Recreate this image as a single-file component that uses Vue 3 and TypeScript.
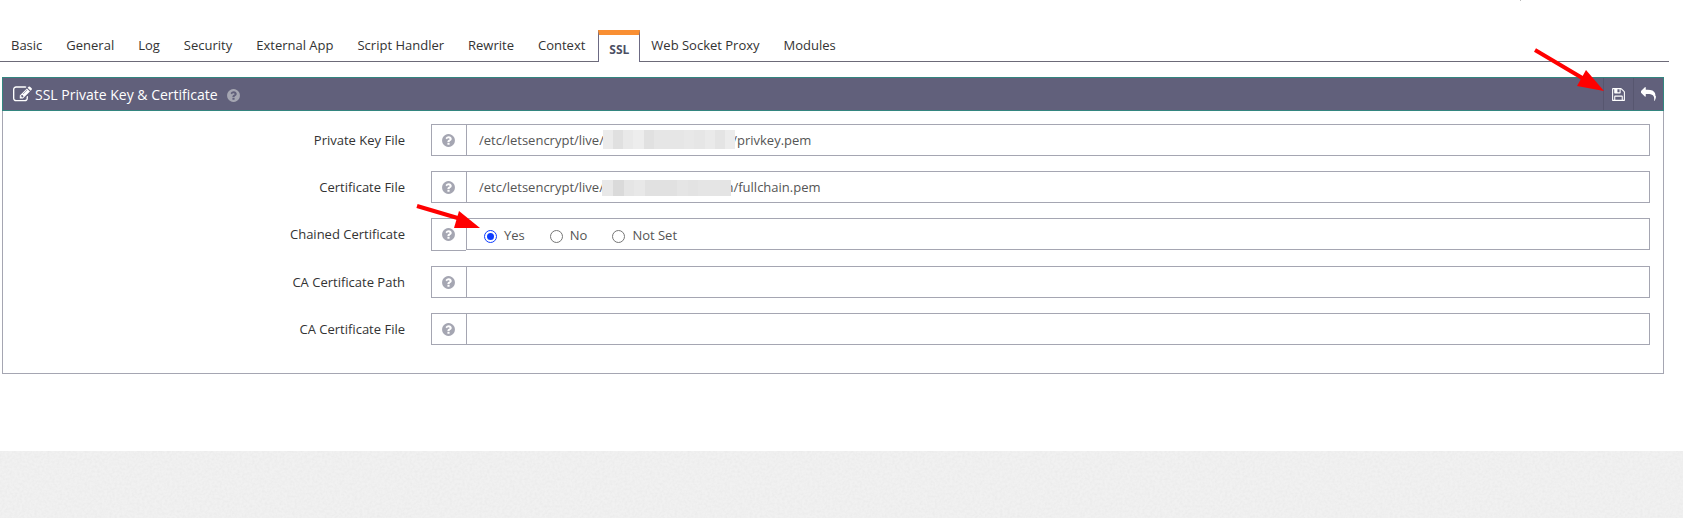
<script setup lang="ts">
import { ref } from 'vue'

interface Field {
  id: string
  label: string
  kind: 'text' | 'radio'
  mask?: 'key' | 'cert'
}

const tabs = ['Basic', 'General', 'Log', 'Security', 'External App', 'Script Handler', 'Rewrite', 'Context', 'SSL', 'Web Socket Proxy', 'Modules']
const activeTab = ref('SSL')

const fields: Field[] = [
  { id: 'keyFile', label: 'Private Key File', kind: 'text', mask: 'key' },
  { id: 'certFile', label: 'Certificate File', kind: 'text', mask: 'cert' },
  { id: 'certChain', label: 'Chained Certificate', kind: 'radio' },
  { id: 'caCertPath', label: 'CA Certificate Path', kind: 'text' },
  { id: 'caCertFile', label: 'CA Certificate File', kind: 'text' },
]

// The host directory is blanked out and covered by a mosaic.
const values = ref<Record<string, string>>({
  keyFile: '/etc/letsencrypt/live/' + ' '.repeat(38) + '/privkey.pem',
  certFile: '/etc/letsencrypt/live/' + ' '.repeat(36) + 'n/fullchain.pem',
  certChain: 'Yes',
  caCertPath: '',
  caCertFile: '',
})

const choices = ['Yes', 'No', 'Not Set']

const masks = {
  key: [[10, '#ebebeb'], [10, '#e0e0e0'], [10, '#e9e9e9'], [11, '#ededed'], [10, '#e1e1e1'], [30, '#e6e6e6'], [10, '#e8e8e8'], [11, '#e6e6e6'], [10, '#eaeaea'], [10, '#e4e4e4'], [10, '#ececec']],
  cert: [[11, '#e8e8e8'], [11, '#dadada'], [10, '#e5e5e5'], [11, '#e8e8e8'], [32, '#e1e1e1'], [11, '#e5e5e5'], [10, '#e3e3e3'], [22, '#e5e5e5'], [11, '#e4e4e4']],
} as Record<string, [number, string][]>

const questionPath = 'M1024 1376v-192q0-14-9-23t-23-9h-192q-14 0-23 9t-9 23v192q0 14 9 23t23 9h192q14 0 23-9t9-23zm256-672q0-88-55.5-163t-138.5-116-170-41q-243 0-371 213-15 24 8 42l132 100q7 6 19 6 16 0 25-12 53-68 86-92 34-24 86-24 48 0 85.5 26t37.5 59q0 38-20 61t-68 45q-63 28-115.5 86.5t-52.5 125.5v36q0 14 9 23t23 9h192q14 0 23-9t9-23q0-19 21.5-49.5t54.5-49.5q32-18 49-28.5t46-35 44.5-48 28-60.5 12.5-81zm384 192q0 209-103 385.5t-279.5 279.5-385.5 103-385.5-103-279.5-279.5-103-385.5 103-385.5 279.5-279.5 385.5-103 385.5 103 279.5 279.5 103 385.5z'
</script>

<template>
  <div class="page">
    <main class="content">
      <span class="speck" aria-hidden="true"></span>
      <nav class="tabs">
        <a v-for="t in tabs" :key="t" href="#" class="tab" :class="{ active: t === activeTab }" @click.prevent="activeTab = t">{{ t }}</a>
      </nav>

      <section class="widget">
        <header class="head">
          <svg class="edit" viewBox="0 0 1792 1792" aria-hidden="true"><path d="M888 1184l116-116-152-152-116 116v56h96v96h56zm440-720q-16-16-33 1l-350 350q-17 17-1 33t33-1l350-350q17-17 1-33zm80 594v190q0 119-84.5 203.5t-203.5 84.5h-832q-119 0-203.5-84.5t-84.5-203.5v-832q0-119 84.5-203.5t203.5-84.5h832q63 0 117 25 15 7 18 23 3 17-9 29l-49 49q-14 14-32 8-23-6-45-6h-832q-66 0-113 47t-47 113v832q0 66 47 113t113 47h832q66 0 113-47t47-113v-126q0-13 9-22l64-64q15-15 35-7t20 29zm-96-738l288 288-672 672h-288v-288zm444 132l-92 92-288-288 92-92q28-28 68-28t68 28l152 152q28 28 28 68t-28 68z" /></svg>
          <h2>SSL Private Key &amp; Certificate</h2>
          <button type="button" class="help" aria-label="Help">
            <svg class="question" viewBox="0 0 1792 1792"><path :d="questionPath" /></svg>
          </button>
          <div class="tools">
            <button type="button" class="tool" aria-label="Save">
              <svg class="save" viewBox="0 0 1792 1792"><path d="M512 1536h768v-384h-768v384zm896 0h128v-896q0-14-10-38.5t-20-34.5l-281-281q-10-10-34-20t-39-10v416q0 40-28 68t-68 28h-576q-40 0-68-28t-28-68v-416h-128v1280h128v-416q0-40 28-68t68-28h832q40 0 68 28t28 68v416zm-384-928v-320q0-13-9.5-22.5t-22.5-9.5h-192q-13 0-22.5 9.5t-9.5 22.5v320q0 13 9.5 22.5t22.5 9.5h192q13 0 22.5-9.5t9.5-22.5zm640 32v928q0 40-28 68t-68 28h-1344q-40 0-68-28t-28-68v-1344q0-40 28-68t68-28h928q40 0 88 20t76 48l280 280q28 28 48 76t20 88z" /></svg>
            </button>
            <button type="button" class="tool" aria-label="Back">
              <svg class="reply" viewBox="0 0 1792 1792"><path d="M1792 1120q0 166-127 451-3 7-10.5 24t-13.5 30-13 22q-12 17-28 17-15 0-23.5-10t-8.5-25q0-9 2.5-26.5t2.5-23.5q5-68 5-123 0-112-19.5-200.5t-54-153.5-89-112-117.5-78-147-46.5-168-23-191-6.5h-224v256q0 26-19 45t-45 19-45-19l-512-512q-19-19-19-45t19-45l512-512q19-19 45-19t45 19 19 45v256h224q713 0 875 403 53 134 53 333z" /></svg>
            </button>
            <svg class="arrow arrow-save" viewBox="0 0 70 44" aria-hidden="true">
              <path d="M1 2 50 31" /><polygon points="70,43 52,22 43,38" />
            </svg>
          </div>
        </header>

        <form class="body" @submit.prevent>
          <div v-for="f in fields" :key="f.id" class="row">
            <label v-if="f.kind === 'text'" class="label" :for="f.id">{{ f.label }}</label>
            <span v-else :id="f.id" class="label">{{ f.label }}</span>
            <div class="group" :class="f.kind">
              <button type="button" class="addon" :aria-label="'Help: ' + f.label">
                <svg class="question" viewBox="0 0 1792 1792"><path :d="questionPath" /></svg>
              </button>
              <input v-if="f.kind === 'text'" :id="f.id" v-model="values[f.id]" class="control" type="text" spellcheck="false" />
              <div v-else class="control choices" role="radiogroup" :aria-labelledby="f.id">
                <label v-for="c in choices" :key="c" class="choice">
                  <input v-model="values[f.id]" type="radio" :name="f.id" :value="c" />{{ c }}
                </label>
              </div>
              <div v-if="f.mask" class="mask" :class="f.mask" aria-hidden="true">
                <i v-for="(m, i) in masks[f.mask]" :key="i" :style="{ width: m[0] + 'px', background: m[1] }"></i>
              </div>
              <svg v-if="f.kind === 'radio'" class="arrow arrow-yes" viewBox="0 0 66 26" aria-hidden="true">
                <path d="M1 3 45 16" /><polygon points="64,25 43,8 38,25" />
              </svg>
            </div>
          </div>
        </form>
      </section>
    </main>
    <footer class="foot">
      <svg class="grain" aria-hidden="true">
        <filter id="grain" x="0" y="0" width="100%" height="100%">
          <feTurbulence type="fractalNoise" baseFrequency="0.4" numOctaves="2" stitchTiles="stitch" />
          <feColorMatrix type="matrix" values="0 0 0 0 0.6  0 0 0 0 0.6  0 0 0 0 0.6  0.3 0 0 0 -0.1" />
        </filter>
        <rect width="100%" height="100%" filter="url(#grain)" />
      </svg>
    </footer>
  </div>
</template>

<style>
body {
  margin: 0;
  background: #fff;
}
</style>

<style scoped>
.page {
  display: flex;
  flex-direction: column;
  min-height: 100vh;
  font: 13px/18px "Open Sans", "Noto Sans", sans-serif;
  color: #333;
}
.content {
  position: relative;
  padding: 30px 14px 77px 0;
}
.speck {
  position: absolute;
  top: 0;
  right: 162px;
  width: 1px;
  height: 1px;
  background: #bbb;
}
.tabs {
  display: flex;
  gap: 2px;
  height: 31px;
  border-bottom: 1px solid #6c6a78;
}
.tab {
  box-sizing: border-box;
  height: 32px;
  padding: 6px 10px;
  border: solid transparent;
  border-width: 0 1px;
  color: #333;
  text-decoration: none;
}
.tab.active {
  margin-right: -2px;
  border-color: #6c6a84;
  border-top: 5px solid #f98f33;
  background: #fff;
  color: #4c4f63;
  font-size: 12px;
  font-weight: 700;
}
.widget {
  margin: 15px 5px 0 2px;
}
.head {
  display: flex;
  align-items: center;
  height: 32px;
  padding-left: 10px;
  border: 1px solid #33857f;
  background: #61607b;
  color: #fff;
}
.head h2 {
  margin: 2px 8px 0 3px;
  font-size: 14px;
  line-height: 20px;
  font-weight: 400;
}
.help {
  margin-top: 2px;
}
svg {
  display: block;
  fill: currentColor;
}
.edit {
  width: 19px;
  height: 19px;
}
.question {
  width: 15px;
  height: 15px;
}
button {
  padding: 0;
  border: 0;
  background: none;
  color: #a5a6b2;
  font: inherit;
}
.tools {
  position: relative;
  display: flex;
  align-self: stretch;
  margin-left: auto;
}
.tool {
  display: flex;
  align-items: center;
  justify-content: center;
  box-sizing: border-box;
  width: 30px;
  border-left: 1px solid #57566f;
  color: #fff;
}
.save {
  width: 15px;
  height: 15px;
}
.reply {
  width: 15px;
  height: 15px;
}
.arrow {
  position: absolute;
  overflow: visible;
  fill: #f00;
  pointer-events: none;
}
.arrow path {
  fill: none;
  stroke: #f00;
  stroke-width: 4;
}
.arrow-save {
  width: 70px;
  height: 44px;
  right: 59px;
  top: -30px;
}
.arrow-yes {
  width: 66px;
  height: 26px;
  left: -15px;
  top: -15px;
}
.body {
  display: flex;
  flex-direction: column;
  gap: 15px;
  padding: 13px 13px 28px 0;
  border: 1px solid #a5a6b2;
  border-top: 0;
}
.row {
  display: grid;
  grid-template-columns: 31fr 94fr;
  column-gap: 26px;
}
.label {
  padding-top: 7px;
  text-align: right;
}
.group {
  position: relative;
  display: flex;
  align-items: flex-start;
}
.addon {
  display: flex;
  align-items: center;
  justify-content: center;
  box-sizing: border-box;
  width: 35px;
  height: 32px;
  padding-right: 1px;
  border: 1px solid #a5a6b2;
  border-right: 0;
}
.radio .addon {
  height: 33px;
}
.control {
  box-sizing: border-box;
  flex: 1;
  min-width: 0;
  height: 32px;
  padding: 6px 12px;
  border: 1px solid #a5a6b2;
  border-radius: 0;
  background: #fff;
  color: #555;
  font: inherit;
  outline: 0;
}
.choices {
  display: flex;
  gap: 25px;
  padding: 7px 17px 5px;
}
.choice {
  display: flex;
  align-items: center;
  gap: 7px;
}
.choice input {
  appearance: none;
  box-sizing: border-box;
  width: 13px;
  height: 13px;
  margin: 3px 0 0;
  border: 1px solid #767676;
  border-radius: 50%;
}
.choice input:checked {
  border-color: #0d3cff;
  background: #0d3cff content-box;
  background-clip: content-box;
  padding: 2px;
}
.mask {
  position: absolute;
  display: flex;
}
.mask.key {
  left: 172px;
  top: 6px;
  height: 19px;
}
.mask.cert {
  left: 171px;
  top: 9px;
  height: 16px;
}
.foot {
  position: relative;
  flex: 1;
  min-height: 60px;
  background: #f1f1f1;
}
.grain {
  position: absolute;
  inset: 0;
  width: 100%;
  height: 100%;
}
</style>
